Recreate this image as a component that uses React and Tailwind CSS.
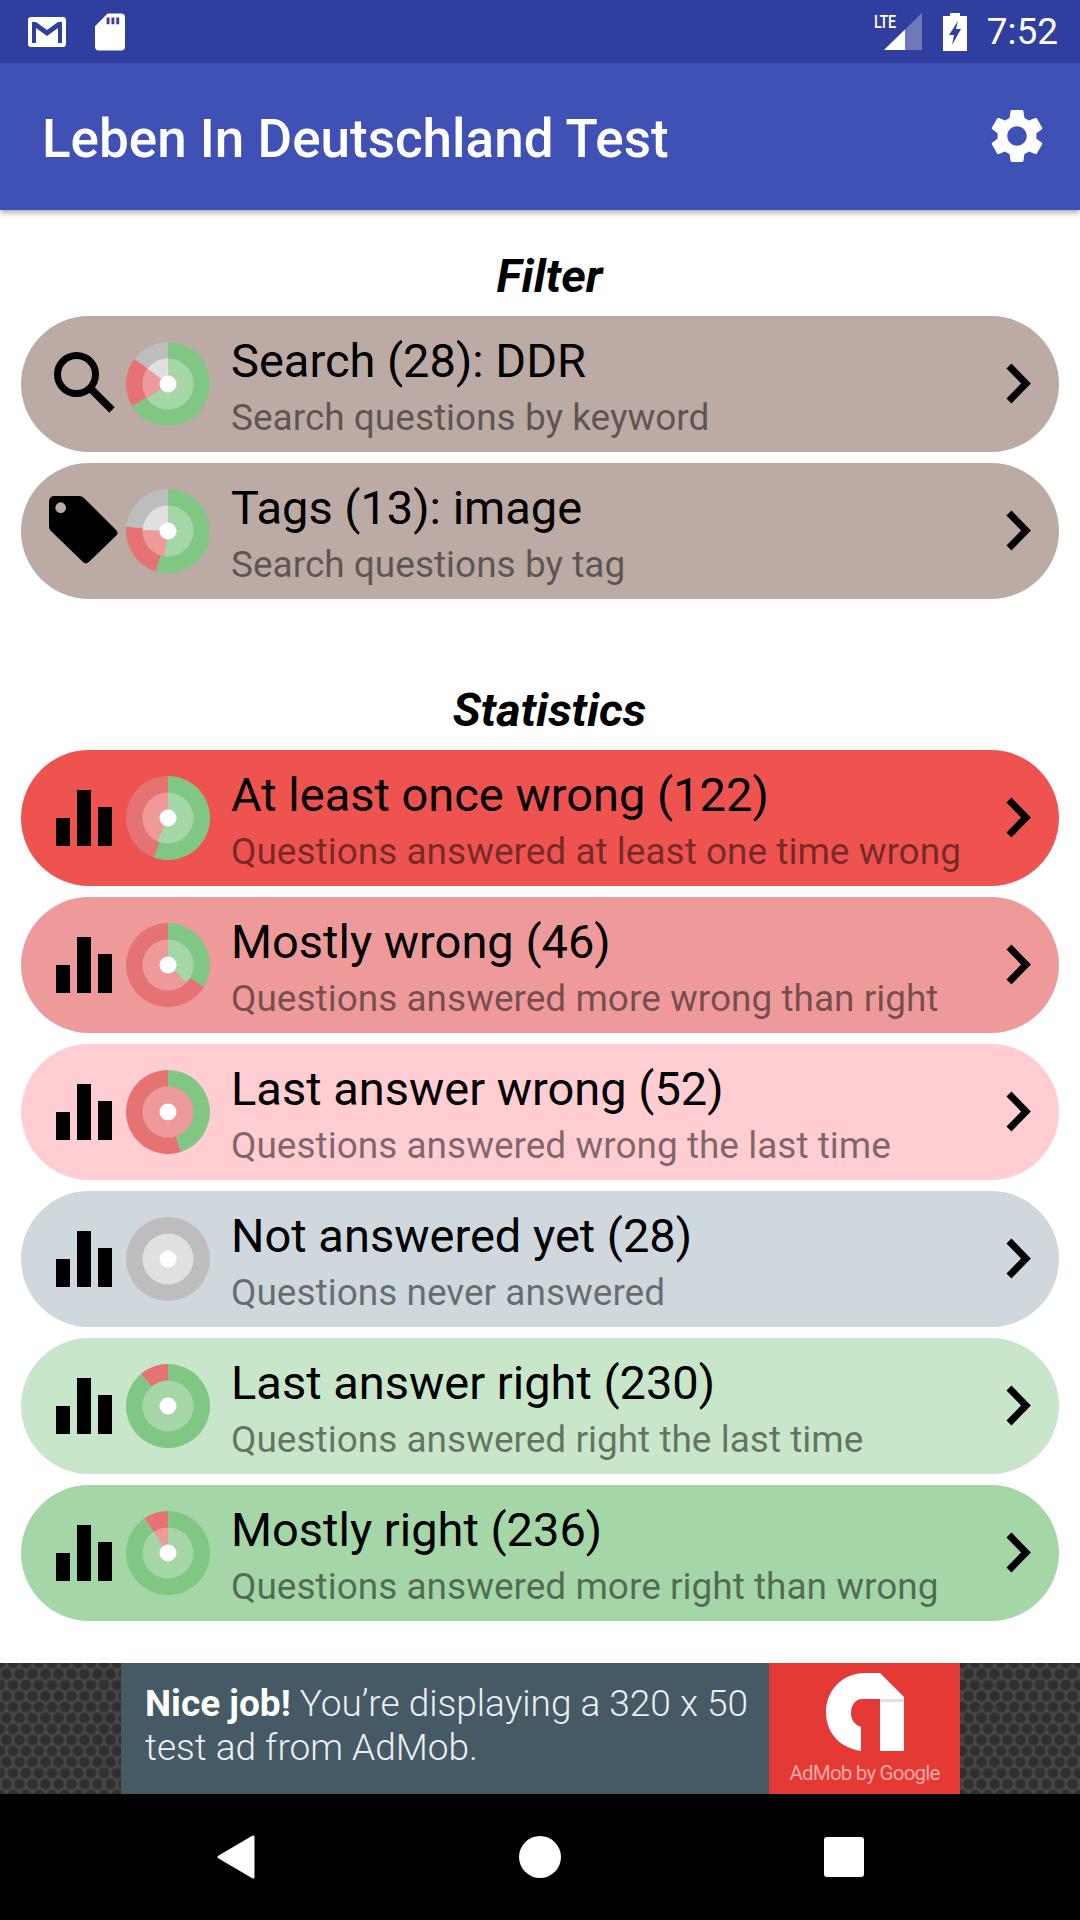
const font = { fontFamily: '"Roboto", sans-serif' };

function polar(r, deg) {
  const a = ((deg - 90) * Math.PI) / 180;
  return [r * Math.cos(a), r * Math.sin(a)];
}
function wedge(r, from, to) {
  const [x1, y1] = polar(r, from);
  const [x2, y2] = polar(r, to);
  const large = to - from > 180 ? 1 : 0;
  return `M0 0L${x1.toFixed(2)} ${y1.toFixed(2)}A${r} ${r} 0 ${large} 1 ${x2.toFixed(2)} ${y2.toFixed(2)}Z`;
}
const COL = {
  g: ["#81C784", "#A5D6A7"],
  r: ["#E57373", "#EF9A9A"],
  n: ["#BDBDBD", "#E0E0E0"],
};
function Ring({ r, idx, parts }) {
  let at = 0;
  return parts.map(([k, deg], i) => {
    const start = at;
    at = deg;
    if (deg - start >= 360) return <circle key={i} r={r} fill={COL[k][idx]} />;
    return <path key={i} d={wedge(r, start, deg)} fill={COL[k][idx]} />;
  });
}
function Donut({ outer, inner }) {
  return (
    <svg width="84" height="84" viewBox="-42 -42 84 84" className="shrink-0">
      <Ring r={42} idx={0} parts={outer} />
      <Ring r={25.5} idx={1} parts={inner} />
      <circle r="8.5" fill="#fff" />
    </svg>
  );
}
function Bars() {
  return (
    <svg width="56" height="56" viewBox="0 0 56 56">
      <rect x="0" y="28" width="14" height="28" />
      <rect x="21" y="0" width="14" height="56" />
      <rect x="42" y="17" width="14" height="39" />
    </svg>
  );
}
function SearchIcon() {
  return (
    <svg width="61" height="61" viewBox="0 0 61 61" fill="none" stroke="#000" className="-mt-[3px]">
      <circle cx="22.500" cy="22.500" r="19" strokeWidth="7" />
      <path d="M36 36L58 58" strokeWidth="7.500" />
    </svg>
  );
}
function TagIcon() {
  return (
    <svg width="70" height="70" viewBox="0 0 72 72">
      <path
        fillRule="evenodd"
        d="M6 0H31Q34 0 36.500 2.500L69 35Q72 38 69 41L41 68Q38 71 35 68L2 36Q0 34 0 31V6Q0 0 6 0ZM12 6.500A5.500 5.500 0 1 0 12.010 17.500A5.500 5.500 0 1 0 12 6.500Z"
      />
    </svg>
  );
}
function Row({ bg, icon, title, sub, outer, inner }) {
  return (
    <div className={`flex h-[136px] items-center rounded-[68px] pr-[26px] ${bg}`}>
      <div className="flex w-[105px] shrink-0 items-center justify-center pl-[21px]">{icon}</div>
      <Donut outer={outer} inner={inner} />
      <div className="ml-[21px] min-w-0 flex-1 pt-[4px]">
        <div className="text-[47px] leading-[56px] text-black" style={font}>{title}</div>
        <div className="mt-[7px] text-[37px] leading-[44px] whitespace-nowrap text-black/50" style={font}>{sub}</div>
      </div>
      <svg width="28" height="44" viewBox="0 0 28 44" fill="none" stroke="#000" strokeWidth="7" className="shrink-0">
        <path d="M4 4L21 21.500L4 39" />
      </svg>
    </div>
  );
}
function Heading({ children, className }) {
  return (
    <div className={`pl-[19px] text-center text-[47px] leading-[52px] font-bold italic text-black ${className}`} style={font}>
      {children}
    </div>
  );
}
const g = (d) => ["g", d];
const r = (d) => ["r", d];
const n = (d) => ["n", d];

export default function App() {
  return (
    <div className="relative flex h-[1920px] w-[1080px] flex-col overflow-hidden bg-white" style={font}>
      <div className="flex h-[63px] items-center justify-between bg-[#303F9F] pl-[28px] pr-[22px] text-white">
        <div className="flex items-center gap-[29px]">
          <svg width="38" height="30" viewBox="0 0 38 30">
            <path fillRule="evenodd" fill="#fff" d="M3 0H35Q38 0 38 3V27Q38 30 35 30H3Q0 30 0 27V3Q0 0 3 0ZM4 5V26H8V11L19 19L30 11V26H34V5H30L19 13L8 5Z" />
          </svg>
          <svg width="30" height="38" viewBox="0 0 31 38">
            <path fillRule="evenodd" fill="#fff" d="M13 0H27Q31 0 31 4V34Q31 38 27 38H4Q0 38 0 34V13ZM12 4V11H15V4ZM17 4V11H20V4ZM22 4V11H25V4Z" />
          </svg>
        </div>
        <div className="flex items-center">
          <div className="relative mr-[21px] h-[37px] w-[38px]">
            <svg width="38" height="37" viewBox="0 0 38 37">
              <path d="M38 0V37H0Z" fill="#fff" opacity="0.3" />
              <path d="M21 16.600V37H0Z" fill="#fff" />
            </svg>
            <span className="absolute -left-[10px] top-[1px] origin-left scale-x-[0.8] text-[18px] leading-[15px] font-medium tracking-[-0.5px] text-white">LTE</span>
          </div>
          <svg width="24" height="38" viewBox="0 0 24 38" className="mr-[20px]">
            <path fill="#fff" fillRule="evenodd" d="M7 0H17V3H24V38H0V3H7ZM15 8L6 22H11L9 32L18 16H13Z" />
          </svg>
          <span className="text-[37px] leading-none text-white">7:52</span>
        </div>
      </div>
      <div className="relative z-10 flex h-[147px] items-center justify-between bg-[#3F51B5] pl-[42px] pr-[36px] shadow-[0_3px_5px_rgba(0,0,0,0.3)]">
        <span className="mt-[5px] text-[53px] leading-none font-medium text-white">Leben In Deutschland Test</span>
        <svg width="54" height="54" viewBox="2 2 20 20" fill="#fff" className="-mt-[2px]">
          <path d="M19.14 12.94c.04-.3.06-.61.06-.94 0-.32-.02-.64-.07-.94l2.03-1.58a.49.49 0 0 0 .12-.61l-1.92-3.32a.488.488 0 0 0-.59-.22l-2.39.96c-.5-.38-1.03-.7-1.62-.94l-.36-2.54a.484.484 0 0 0-.48-.41h-3.84c-.24 0-.43.17-.47.41l-.36 2.54c-.59.24-1.13.57-1.62.94l-2.39-.96c-.22-.08-.47 0-.59.22L2.74 8.87c-.12.21-.08.47.12.61l2.03 1.58c-.05.3-.09.63-.09.94s.02.64.07.94l-2.03 1.58a.49.49 0 0 0-.12.61l1.92 3.32c.12.22.37.29.59.22l2.39-.96c.5.38 1.03.7 1.62.94l.36 2.54c.05.24.24.41.48.41h3.84c.24 0 .44-.17.47-.41l.36-2.54c.59-.24 1.13-.56 1.62-.94l2.39.96c.22.08.47 0 .59-.22l1.92-3.32c.12-.22.07-.47-.12-.61l-2.01-1.58zM12 15.600c-1.980 0-3.600-1.620-3.600-3.600s1.620-3.600 3.600-3.600 3.600 1.620 3.600 3.600-1.620 3.600-3.600 3.600z" />
        </svg>
      </div>
      <div className="flex flex-1 flex-col px-[21px]">
        <Heading className="mt-[40px] mb-[14px]">Filter</Heading>
        <div className="flex flex-col gap-[11px]">
          <Row bg="bg-[#BCAAA4]" icon={<SearchIcon />} title="Search (28): DDR" sub="Search questions by keyword"
            outer={[g(238), r(307), n(360)]} inner={[g(236), r(307), n(360)]} />
          <Row bg="bg-[#BCAAA4]" icon={<TagIcon />} title="Tags (13): image" sub="Search questions by tag"
            outer={[g(197), r(276), n(360)]} inner={[g(188), r(272), n(360)]} />
        </div>
        <Heading className="mt-[85px] mb-[14px]">Statistics</Heading>
        <div className="flex flex-col gap-[11px]">
          <Row bg="bg-[#EF5350]" icon={<Bars />} title="At least once wrong (122)" sub="Questions answered at least one time wrong"
            outer={[g(200), r(360)]} inner={[g(206), r(360)]} />
          <Row bg="bg-[#EF9A9A]" icon={<Bars />} title="Mostly wrong (46)" sub="Questions answered more wrong than right"
            outer={[g(121), r(360)]} inner={[g(134), r(360)]} />
          <Row bg="bg-[#FFCDD2]" icon={<Bars />} title="Last answer wrong (52)" sub="Questions answered wrong the last time"
            outer={[g(162), r(360)]} inner={[r(360)]} />
          <Row bg="bg-[#CFD8DC]" icon={<Bars />} title="Not answered yet (28)" sub="Questions never answered"
            outer={[n(360)]} inner={[n(360)]} />
          <Row bg="bg-[#C8E6C9]" icon={<Bars />} title="Last answer right (230)" sub="Questions answered right the last time"
            outer={[g(320), r(360)]} inner={[g(360)]} />
          <Row bg="bg-[#A5D6A7]" icon={<Bars />} title="Mostly right (236)" sub="Questions answered more right than wrong"
            outer={[g(326), r(360)]} inner={[g(326), r(360)]} />
        </div>
      </div>
      <div className="flex h-[131px] justify-center bg-[#484848] bg-[radial-gradient(circle_closest-side,#2f2f2f_65%,transparent_100%),radial-gradient(circle_closest-side,#2f2f2f_65%,transparent_100%)] bg-[length:13px_22px] bg-[position:0_0,6.500px_11px]">
        <div className="ml-[1px] flex w-[839px]">
          <div className="flex-1 bg-[#455A64] pl-[24px] pt-[19px] text-[37px] leading-[44px] font-light text-[#ECEFF1]">
            <b className="font-bold text-white">Nice job!</b> You’re displaying a 320 x 50 test ad from AdMob.
          </div>
          <div className="flex w-[191px] flex-col items-center bg-[#E53935] pt-[10px]">
            <svg width="78" height="78" viewBox="0 0 78 78">
              <path fill="#fff" d="M39 0H54L78 24V78H54V26H36C29 26 25 33 25 40C25 47 29 52 35 54V78C14 75 0 60 0 39C0 17 17 0 39 0Z" />
              <rect x="54" y="26" width="24" height="3" fill="#E0E0E0" />
            </svg>
            <span className="mt-[10px] text-[20.500px] leading-[24px] tracking-[-0.8px] whitespace-nowrap text-[#F8A8A5]">AdMob by Google</span>
          </div>
        </div>
      </div>
      <div className="flex h-[126px] items-center justify-between bg-black pl-[217px] pr-[216px]">
        <svg width="38" height="44" viewBox="0 0 38 44"><path fill="#fff" d="M36 2V42L2 22Z" stroke="#fff" strokeWidth="3" strokeLinejoin="round" /></svg>
        <div className="h-[42px] w-[42px] rounded-full bg-white" />
        <div className="h-[40px] w-[40px] rounded-[3px] bg-white" />
      </div>
    </div>
  );
}
